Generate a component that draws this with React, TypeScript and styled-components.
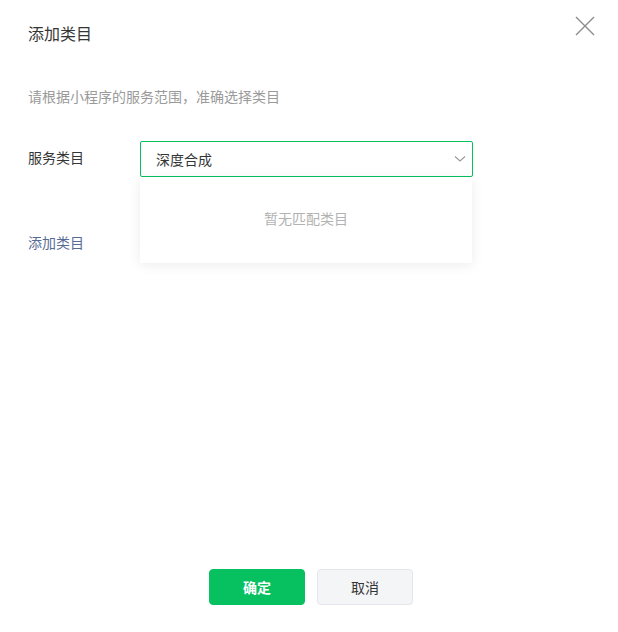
import React from "react";
import styled, { createGlobalStyle } from "styled-components";

const Global = createGlobalStyle`
  html, body { margin: 0; padding: 0; background: #ffffff; }
  body {
    font-family: "Noto Sans CJK SC", "Noto Sans", "Liberation Sans", sans-serif;
    color: #353535;
  }
  * { box-sizing: border-box; }
`;

const Dialog = styled.div`
  min-height: 100vh;
  display: flex;
  flex-direction: column;
  background: #fff;
`;

const Header = styled.div`
  display: flex;
  justify-content: space-between;
  align-items: flex-start;
  padding: 16px 23px 0 28px;
  height: 52px;
`;

const Title = styled.h3`
  margin: 5px 0 0;
  font-size: 16px;
  font-weight: 400;
  line-height: 24px;
  color: #353535;
`;

const CloseButton = styled.button`
  width: 20px;
  height: 20px;
  padding: 0;
  border: none;
  background: transparent;
  display: flex;
  align-items: center;
  justify-content: center;
  cursor: pointer;
`;

const Body = styled.div`
  padding: 0 28px;
`;

const Tip = styled.p`
  margin: 34px 0 0;
  font-size: 14px;
  line-height: 20px;
  color: #9a9a9a;
`;

const FormRow = styled.div`
  display: flex;
  align-items: flex-start;
  margin-top: 35px;
`;

const Label = styled.label`
  width: 112px;
  flex-shrink: 0;
  font-size: 14px;
  line-height: 33px;
  color: #353535;
`;

const SelectWrap = styled.div`
  position: relative;
  width: 333px;
`;

const SelectBox = styled.div`
  height: 36px;
  border: 1px solid #07c160;
  border-radius: 2px;
  display: flex;
  align-items: center;
  justify-content: space-between;
  padding: 0 6px 0 15px;
  font-size: 14px;
  color: #353535;
  background: #fff;
`;

const Dropdown = styled.div`
  position: absolute;
  top: 36px;
  left: 0;
  width: 332px;
  height: 86px;
  padding-bottom: 4px;
  background: #fff;
  box-shadow: 0 2px 12px rgba(0, 0, 0, 0.08);
  display: flex;
  align-items: center;
  justify-content: center;
  font-size: 14px;
  color: #b2b2b2;
  z-index: 2;
`;

const AddLink = styled.a`
  display: inline-block;
  margin-top: 55px;
  font-size: 14px;
  line-height: 20px;
  color: #576b95;
  text-decoration: none;
  cursor: pointer;
`;

const Footer = styled.div`
  margin-top: auto;
  display: flex;
  justify-content: center;
  gap: 12px;
  padding: 0 0 27px 4px;
`;

const Button = styled.button<{ $primary?: boolean }>`
  width: 96px;
  height: 36px;
  border-radius: 4px;
  font-family: inherit;
  font-size: 14px;
  cursor: pointer;
  border: 1px solid ${(p) => (p.$primary ? "#07c160" : "#e4e6eb")};
  background: ${(p) => (p.$primary ? "#07c160" : "#f4f5f7")};
  color: ${(p) => (p.$primary ? "#ffffff" : "#353535")};
  font-weight: ${(p) => (p.$primary ? 700 : 400)};
`;

export default function App() {
  return (
    <>
      <Global />
      <Dialog>
        <Header>
          <Title>添加类目</Title>
          <CloseButton aria-label="关闭">
            <svg width="20" height="20" viewBox="0 0 20 20">
              <path d="M1 1 L19 19 M19 1 L1 19" stroke="#8c8c8c" strokeWidth="1.4" fill="none" />
            </svg>
          </CloseButton>
        </Header>
        <Body>
          <Tip>请根据小程序的服务范围，准确选择类目</Tip>
          <FormRow>
            <Label>服务类目</Label>
            <SelectWrap>
              <SelectBox>
                <span>深度合成</span>
                <svg width="12" height="8" viewBox="0 0 12 8">
                  <polyline points="1,1.5 6,6 11,1.5" stroke="#9a9a9a" strokeWidth="1.1" fill="none" />
                </svg>
              </SelectBox>
              <Dropdown>暂无匹配类目</Dropdown>
            </SelectWrap>
          </FormRow>
          <AddLink>添加类目</AddLink>
        </Body>
        <Footer>
          <Button $primary>确定</Button>
          <Button>取消</Button>
        </Footer>
      </Dialog>
    </>
  );
}
